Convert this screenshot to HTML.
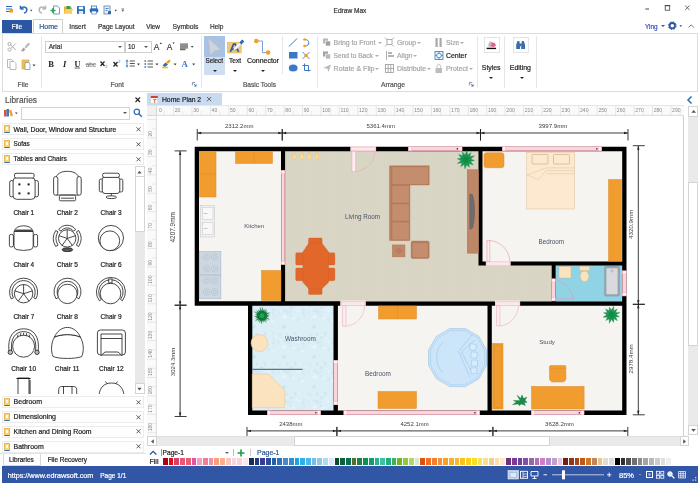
<!DOCTYPE html>
<html lang="en">
<head>
<meta charset="utf-8">
<title>Edraw Max - Home Plan 2</title>
<style>
*{box-sizing:border-box;margin:0;padding:0}
html,body{width:700px;height:485px;overflow:hidden;background:#fff}
body{font-family:"Liberation Sans",sans-serif;font-size:8px;color:#333;position:relative}
.a{position:absolute}
.t{position:absolute;white-space:nowrap;line-height:1;-webkit-text-stroke:.2px}
svg{position:absolute;overflow:visible}
#win{position:absolute;left:0;top:0;width:700px;height:485px;overflow:hidden;will-change:transform}
/* title */
#title{left:0;top:0;width:700px;height:19px;background:#fff}
/* tabs */
.tab{position:absolute;top:21px;height:11px;font-size:8.3px;line-height:11px;color:#333;white-space:nowrap}
#filebtn{left:2px;top:19.5px;width:29.5px;height:13px;background:#2b56a4;color:#fff;font-size:8.3px;line-height:13.5px;text-align:center}
#hometab{left:33px;top:19px;width:30px;height:15px;border:1px solid #d0d0d0;border-bottom:none;background:#fff;color:#2b579a;font-size:8.3px;line-height:13px;text-align:center}
/* ribbon */
#ribbon{left:2px;top:32.500px;width:696px;height:59px;border:1px solid #dcdcdc;background:#fff}
.sep{position:absolute;top:36px;width:1px;height:52px;background:#e6e6e6}
.glabel{position:absolute;top:80px;font-size:8px;color:#555;line-height:9px;white-space:nowrap;transform:translateX(-50%)}
.rt{position:absolute;font-size:7.8px;line-height:9px;color:#a0a0a0;white-space:nowrap}
.rtd{color:#333}
.combo{position:absolute;border:1px solid #cfcfcf;background:#fff;height:12px;font-size:7.8px;line-height:10px;color:#333;padding-left:3px}
.dd{position:absolute;width:0;height:0;border-left:2px solid transparent;border-right:2px solid transparent;border-top:2.5px solid #555}
/* libraries */
#lib{left:0;top:92px;width:146px;height:374px;background:#fff}
.cat{position:absolute;left:2px;width:142px;height:13px;border:1px solid #ececec;background:#fefefe;font-size:8.2px;line-height:11px;color:#222;padding-left:11.5px;white-space:nowrap}
.cat i{position:absolute;left:.5px;top:1.5px;width:6.5px;height:8px;background:#f7d57e;border:1px solid #e6b956;border-bottom:1.500px solid #2f6fb5}
.cat i:after{content:"";position:absolute;left:1px;top:1.200px;width:2.500px;height:3px;background:#fff8e4}
.cat b{position:absolute;right:5px;top:0;font-weight:normal;font-size:9px;color:#333}
.shl{position:absolute;font-size:7.8px;line-height:9px;color:#222;white-space:nowrap;transform:translateX(-50%)}
/* status */
#status{left:2px;top:466px;width:696px;height:17px;background:#3156a6;color:#fff;font-size:8.2px}
</style>
</head>
<body>
<div id="win">
<!-- TITLE BAR -->
<div id="title" class="a"></div>
<svg width="130" height="19" viewBox="0 0 130 19" style="left:0;top:0">
  <g stroke="#2b6cb8" stroke-width="1.2" fill="none"><path d="M6 6.500h6M6 9h6M6 11.500h6"/></g>
  <rect x="9.500" y="9" width="3.500" height="3.500" fill="#f0a020"/>
  <path d="M20.500 9v-3.200M20.500 9h3.200M20.800 8.700c2.500-3 7-1.500 5.800 2.200c-.4 1.200-1.400 2-2.600 2.200" stroke="#2b6cb8" stroke-width="1.500" fill="none"/>
  <path d="M30 9.800h2.400l-1.200 1.600z" fill="#444"/>
  <path d="M45.500 9v-3.200M45.500 9h-3.200M45.200 8.700c-2.500-3-7-1.500-5.800 2.200c.4 1.200 1.400 2 2.600 2.200" stroke="#b4b4b4" stroke-width="1.500" fill="none"/>
  <path d="M53.500 6h4l2 2v6h-6z" fill="#fff" stroke="#5580b0" stroke-width=".8"/>
  <path d="M50.500 10.500h5M53 8v5" stroke="#2aa44a" stroke-width="1.600"/>
  <path d="M64 6.500h4l1 1h3v6h-8z" fill="#f0b030"/>
  <path d="M66.500 6h4v5h-4z" fill="#3a9a5a"/>
  <path d="M64 13.500l1.500-4.500h7.500l-1.500 4.500z" fill="#f8d060"/>
  <rect x="77" y="6" width="8" height="8" rx=".8" fill="#2b6cb8"/>
  <rect x="78.800" y="6.700" width="4.400" height="2.600" fill="#fff"/>
  <rect x="78.800" y="11" width="4.400" height="3" fill="#dfe9f5"/>
  <rect x="91.500" y="6" width="5" height="3" fill="#fff" stroke="#2b6cb8" stroke-width=".8"/>
  <rect x="89.800" y="8.500" width="8.400" height="4" rx=".8" fill="#2b6cb8"/>
  <rect x="91.800" y="11" width="4.400" height="3" fill="#fff" stroke="#2b6cb8" stroke-width=".6"/>
  <rect x="104" y="6" width="6" height="8" fill="#e6eef8" stroke="#5580b0" stroke-width=".8"/>
  <path d="M105.500 8.500h3M105.500 10.500h2" stroke="#2b6cb8" stroke-width=".8"/>
  <path d="M108 11h3v3h-3z" fill="#2b6cb8"/>
  <path d="M114.500 9.800h2.400l-1.200 1.600z" fill="#444"/>
  <path d="M121.500 9h2.600" stroke="#444" stroke-width=".8"/>
  <path d="M121.500 10.200h2.600l-1.300 1.600z" fill="#444"/>
</svg>
<svg width="60" height="19" viewBox="640 0 60 19" style="left:640px;top:0">
  <path d="M645.400 9h3.600" stroke="#444" stroke-width="1"/>
  <rect x="665.200" y="5.700" width="4.500" height="4.500" fill="none" stroke="#444" stroke-width=".8"/><path d="M664.800 5.600h5.300" stroke="#444" stroke-width="1"/>
  <path d="M685.200 5.600l4.300 4.300M689.500 5.600l-4.300 4.300" stroke="#444" stroke-width=".8"/>
</svg>
<svg width="40" height="14" viewBox="660 19 40 14" style="left:660px;top:19px">
  <circle cx="672.300" cy="25.700" r="2.700" fill="none" stroke="#2b579a" stroke-width="1.800"/>
  <circle cx="672.300" cy="25.700" r="3.900" fill="none" stroke="#2b579a" stroke-width="1" stroke-dasharray="1.500 1.560"/>
  <path d="M679.400 25.200h2.800l-1.400 1.800z" fill="#2b579a"/>
  <path d="M688.500 27.500l2.700-2.700l2.700 2.700" fill="none" stroke="#666" stroke-width=".9"/>
</svg>

<div class="t" style="left:333.6px;top:8px;font-size:6.56px;color:#333;">Edraw Max</div>
<div id="filebtn" class="a"></div>
<div id="hometab" class="a"></div>
<div class="t" style="left:11.8px;top:24px;font-size:6.33px;color:#fff;">File</div>
<div class="t" style="left:39.3px;top:23px;font-size:7.01px;color:#2b579a;">Home</div>
<div class="t" style="left:69.3px;top:24px;font-size:6.6px;color:#333;">Insert</div>
<div class="t" style="left:98px;top:24px;font-size:6.5px;color:#333;">Page Layout</div>
<div class="t" style="left:146.3px;top:24px;font-size:6.37px;color:#333;">View</div>
<div class="t" style="left:172.5px;top:24px;font-size:6.78px;color:#333;">Symbols</div>
<div class="t" style="left:210px;top:24px;font-size:6.56px;color:#333;">Help</div>
<div class="t" style="left:645px;top:24px;font-size:6.47px;color:#3b4fc4;">Ying</div>
<div class="dd" style="left:660.5px;top:25.1px;border-top-color:#2b579a"></div>
<div id="ribbon" class="a"></div>
<div class="sep" style="left:41px;height:52px"></div>
<div class="sep" style="left:200.5px;height:52px"></div>
<div class="sep" style="left:281.5px;height:38px"></div>
<div class="sep" style="left:316.5px;height:52px"></div>
<div class="sep" style="left:476.5px;height:52px"></div>
<div class="sep" style="left:504px;height:52px"></div>
<div class="sep" style="left:535.5px;height:52px"></div>
<!-- File group icons -->
<svg width="40" height="40" viewBox="0 0 40 40" style="left:2px;top:34px">
  <g stroke="#a8a8a8" stroke-width=".9" fill="none"><circle cx="7.500" cy="10" r="1.600"/><circle cx="7.500" cy="15.500" r="1.600"/><path d="M8.800 11l5 5M8.800 14.500l5-5"/></g>
  <path d="M26.500 8.500l-4 4.500l1.500 1.500l4-4.500z" fill="#b8b8b8"/><path d="M21.500 13.500l2 2l-2.500 2l-2-.5z" fill="#a0a0a0"/>
  <path d="M5.500 25.500h4l2 2v6h-6z" fill="#fff" stroke="#a8a8a8" stroke-width=".8"/><path d="M8 27.500h4l2 2v6h-6z" fill="#fff" stroke="#a8a8a8" stroke-width=".8"/>
  <rect x="20" y="26" width="7" height="9" fill="#f3c14b" stroke="#d9a23a" stroke-width=".6"/>
  <path d="M23 28.500h3.500l1.500 1.500v5.500h-5z" fill="#fff" stroke="#6a8cc0" stroke-width=".7"/>
  <path d="M30.500 30.500h3l-1.500 2z" fill="#444"/>
</svg>
<!-- Font group icons -->
<svg width="50" height="14" viewBox="152 40 50 14" style="left:152px;top:40px">
  <text x="153.800" y="50" font-family="Liberation Sans, sans-serif" font-size="8.400" fill="#333" stroke="#333" stroke-width=".15">A</text>
  <path d="M159.600 44l1.200-1.600l1.200 1.600z" fill="#333"/>
  <text x="166.800" y="50" font-family="Liberation Sans, sans-serif" font-size="8.400" fill="#333" stroke="#333" stroke-width=".15">A</text>
  <path d="M172.400 42.400l1.200 1.600l1.200-1.600z" fill="#333"/>
  <path d="M180 44.200h8M180 46h8M180 47.800h8M180 49.500h5.500" stroke="#6a6a6a" stroke-width="1.300"/><path d="M190.800 46h2.800l-1.400 1.800z" fill="#444"/>
</svg>
<svg width="160" height="14" viewBox="0 0 160 14" style="left:45px;top:57px">
  <text x="3.300" y="10" font-family="Liberation Serif, serif" font-weight="bold" font-size="8.500" fill="#222">B</text>
  <text x="18" y="10" font-family="Liberation Serif, serif" font-weight="bold" font-style="italic" font-size="8.500" fill="#222">I</text>
  <text x="29.500" y="9.500" font-family="Liberation Serif, serif" font-weight="bold" font-size="8" fill="#222">U</text><path d="M29.500 11h5.500" stroke="#222" stroke-width=".7"/>
  <text x="40.800" y="9.500" font-family="Liberation Sans, sans-serif" font-size="6.300" fill="#6a6a6a">abc</text><path d="M40.300 7.300h10.500" stroke="#6a6a6a" stroke-width=".6"/>
  <path d="M55.500 4.500l4 4.500M59.500 4.500l-4 4.500" stroke="#222" stroke-width="1.200"/><text x="60.300" y="10.500" font-family="Liberation Sans, sans-serif" font-size="4" fill="#2b6cb8">2</text>
  <path d="M68.500 5l4 4.500M72.500 5l-4 4.500" stroke="#222" stroke-width="1.200"/><text x="73.300" y="6" font-family="Liberation Sans, sans-serif" font-size="4" fill="#2b6cb8">2</text>
  <path d="M82 2.500l1.500 2h-3zM82 10.500l1.500-2h-3z" fill="#2b6cb8"/><path d="M82 4.500v4" stroke="#2b6cb8" stroke-width=".8"/><path d="M84.800 4h5M84.800 6.500h5M84.800 9h5" stroke="#555" stroke-width="1.100"/><path d="M92 6.500h3l-1.500 2z" fill="#444"/>
  <path d="M99.500 4h1.500M99.500 7h1.500M99.500 10h1.500" stroke="#2b6cb8" stroke-width="1.300"/><path d="M102.500 4h5.500M102.500 7h5.500M102.500 10h5.500" stroke="#555" stroke-width="1"/><path d="M110.500 6.500h3l-1.500 2z" fill="#444"/>
  <path d="M117.500 8.500l3-3l2.500 2l-3 2.500z" fill="#2b6cb8"/><path d="M121 5l3.500-2.500l1.200 1.400l-2.800 3z" fill="#e8a020"/><path d="M117 10.500h6" stroke="#f0c020" stroke-width="1.600"/><path d="M128.600 6.500h3l-1.500 2z" fill="#444"/>
  <text x="136.600" y="9.900" font-family="Liberation Serif, serif" font-weight="bold" font-size="8.800" fill="#3a78c8">A</text>
  <path d="M147.200 6.500h3l-1.500 2z" fill="#444"/>
</svg>
<svg width="5" height="5" viewBox="0 0 6 6" style="left:192px;top:81.500px"><path d="M.5 4V.5H4" fill="none" stroke="#666" stroke-width=".8"/><path d="M2 2l3 3M5 2.500v2.500h-2.500" fill="none" stroke="#2b6cb8" stroke-width=".9"/></svg>
<!-- Basic Tools icons -->
<div class="a" style="left:204px;top:35.500px;width:21px;height:39px;background:#cfdff2"></div>
<div class="a" style="left:204px;top:35.500px;width:21px;height:21.500px;background:#a9c1e3"></div>
<svg width="90" height="24" viewBox="204 35 90 24" style="left:204px;top:35px">
  <path d="M208.500 38.500l12.500 11.500l-6.300.4l-4.300 4.600z" fill="#cfd3da" stroke="#bcc0c8" stroke-width=".5"/>
  <rect x="227.300" y="42.200" width="14" height="10.800" fill="#f0c878" stroke="#e6b050" stroke-width=".5"/>
  <path d="M230.300 51.800l3.300-7.600h1.600l3.300 7.600M231.600 49.300h5" stroke="#2b5cae" stroke-width="1.700" fill="none"/>
  <path d="M233.300 50.600l1.200-3.200l4.800-5l2 1.900l-4.800 5z" fill="#f4f6fa" stroke="#c8d4e8" stroke-width=".3"/>
  <path d="M239.300 42.400l1.900-2l2.100 2l-1.900 2z" fill="#2b6cb8"/><path d="M241.200 40.400l.9-.9l2.100 2l-.9.900z" fill="#1e4e94"/>
  <path d="M256.300 41h6.200v11.600h5.600" fill="none" stroke="#6c94d8" stroke-width=".9"/>
  <circle cx="256.300" cy="41" r="2.300" fill="#f0a21e"/><circle cx="268.100" cy="52.500" r="2.300" fill="#f0a21e"/>
</svg>
<svg width="30" height="40" viewBox="0 0 30 40" style="left:286px;top:35px">
  <path d="M3 11.500l8-8" stroke="#3a7ac8" stroke-width="1"/>
  <path d="M19 4.500c5 0 5 6.500 0 6.500" fill="none" stroke="#3a7ac8" stroke-width="1"/><circle cx="18.500" cy="4.500" r="1.300" fill="#f0a020"/><circle cx="18.500" cy="11" r="1.300" fill="#f0a020"/>
  <rect x="3" y="17" width="8.500" height="6.500" fill="#3a7ac8"/>
  <path d="M16.500 17l7 7M23.500 17l-7 7" stroke="#5a8ad0" stroke-width="1"/><circle cx="20" cy="20.500" r="1.700" fill="#f0a020"/>
  <ellipse cx="7.200" cy="33" rx="4.400" ry="3.600" fill="#3a7ac8"/>
  <path d="M18.500 28.500v7h6M16.500 30.500h6v6" fill="none" stroke="#3a7ac8" stroke-width="1"/>
</svg>
<!-- Arrange icons -->
<svg width="130" height="40" viewBox="0 0 130 40" style="left:320px;top:35px">
  <g fill="#b8b8b8">
    <rect x="3" y="3.500" width="5" height="5"/><rect x="5.500" y="6" width="5" height="5" fill="#a0a0a0" stroke="#fff" stroke-width=".6"/>
    <rect x="3" y="16.500" width="5" height="5" fill="#a0a0a0"/><rect x="5.500" y="19" width="5" height="5" stroke="#fff" stroke-width=".6"/>
    <path d="M3 33l8-3.500l-2.500 7.500l-1.200-3.400z"/>
  </g>
  <g fill="none" stroke="#9a9a9a" stroke-width=".8">
    <rect x="67" y="4.500" width="5" height="5"/><path d="M65 2.500l2 2M74 2.500l-2 2M65 11.500l2-2M74 11.500l-2-2"/>
    <path d="M66.500 16v9"/><path d="M68 18h4M68 21h6" stroke-width="1.600"/>
    <rect x="65.500" y="29.500" width="8" height="8"/><path d="M68.200 29.500v8M70.800 29.500v8M65.500 33.500h8"/>
  </g>
  <rect x="115.500" y="3" width="2.200" height="9" fill="#a8a8a8"/><rect x="119.500" y="3" width="2.200" height="9" fill="#a8a8a8"/>
  <rect x="115" y="16.500" width="8" height="8" fill="#eaf2fb" stroke="#3a78c0" stroke-width=".8"/><circle cx="119" cy="20.500" r="2.300" fill="#fff" stroke="#3a78c0" stroke-width=".8"/><path d="M119 16.500v2M119 22.500v2M115 20.500h2M121 20.500h2" stroke="#3a78c0" stroke-width=".7"/>
  <rect x="115.500" y="33" width="6.500" height="5" fill="#bdbdbd"/><path d="M117 33v-1.700a1.800 1.800 0 0 1 3.600 0V33" fill="none" stroke="#bdbdbd" stroke-width=".9"/>
</svg>
<svg width="5" height="5" viewBox="0 0 6 6" style="left:468.500px;top:81.500px"><path d="M.5 4V.5H4" fill="none" stroke="#666" stroke-width=".8"/><path d="M2 2l3 3M5 2.500v2.500h-2.500" fill="none" stroke="#2b6cb8" stroke-width=".9"/></svg>
<!-- Styles / Editing -->
<div class="a" style="left:483.500px;top:37px;width:16px;height:16px;border:1px solid #e4e4e4;background:#fff"></div>
<svg width="16" height="16" viewBox="0 0 16 16" style="left:483.500px;top:37px">
  <path d="M2.600 11.400h9.500" stroke="#111" stroke-width="1.400"/><path d="M6 9.500l1.500-4.500l3.500 1.200l1 2.300l-2 1.500z" fill="#e8608a"/><path d="M4 9.500l1-4l2-1.500l.8 2l-1.300 3.500z" fill="#b8bcc4"/>
</svg>
<div class="a" style="left:513px;top:37px;width:16px;height:16px;border:1px solid #e4e4e4;background:#fff"></div>
<svg width="16" height="16" viewBox="0 0 16 16" style="left:513px;top:37px">
  <path d="M3.200 12V7.500l1.300-3.500h1.800L7 7.500V12zM8.200 12V7.500l.7-3.500h1.800l1.300 3.500V12z" fill="#3a6ea8"/><rect x="6.800" y="6.500" width="1.600" height="2.800" fill="#3a6ea8"/>
</svg>

<div class="t" style="left:17.6px;top:82px;font-size:6.7px;color:#555;">File</div>
<div class="combo" style="left:45px;top:40.5px;width:80px"></div>
<div class="combo" style="left:124.5px;top:40.5px;width:27px"></div>
<div class="t" style="left:48.7px;top:44px;font-size:6.65px;color:#333;">Arial</div>
<div class="t" style="left:128px;top:44px;font-size:6.29px;color:#333;">10</div>
<div class="dd" style="left:118px;top:46px;border-top-color:#555"></div>
<div class="dd" style="left:144px;top:46px;border-top-color:#555"></div>
<div class="t" style="left:110.5px;top:82px;font-size:6.7px;color:#555;">Font</div>
<div class="t" style="left:205.5px;top:58px;font-size:6.3px;color:#222;">Select</div>
<div class="t" style="left:229px;top:58px;font-size:6.54px;color:#222;">Text</div>
<div class="t" style="left:247px;top:58px;font-size:6.94px;color:#222;">Connector</div>
<div class="dd" style="left:212.5px;top:69.6px;border-top-color:#222"></div>
<div class="dd" style="left:233px;top:69.6px;border-top-color:#222"></div>
<div class="dd" style="left:261px;top:69.6px;border-top-color:#222"></div>
<div class="t" style="left:243px;top:82px;font-size:6.55px;color:#555;">Basic Tools</div>
<div class="t" style="left:333.6px;top:40px;font-size:6.9px;color:#a6a6a6;">Bring to Front</div>
<div class="dd" style="left:377.5px;top:41.6px;border-top-color:#b0b0b0"></div>
<div class="t" style="left:333.6px;top:53px;font-size:6.62px;color:#a6a6a6;">Send to Back</div>
<div class="dd" style="left:375px;top:54.6px;border-top-color:#b0b0b0"></div>
<div class="t" style="left:333.6px;top:66px;font-size:7.09px;color:#a6a6a6;">Rotate &amp; Flip</div>
<div class="dd" style="left:374.5px;top:67.6px;border-top-color:#b0b0b0"></div>
<div class="t" style="left:397px;top:40px;font-size:6.9px;color:#a6a6a6;">Group</div>
<div class="dd" style="left:417px;top:41.6px;border-top-color:#b0b0b0"></div>
<div class="t" style="left:397px;top:53px;font-size:6.9px;color:#a6a6a6;">Align</div>
<div class="dd" style="left:413px;top:54.6px;border-top-color:#b0b0b0"></div>
<div class="t" style="left:397px;top:66px;font-size:6.9px;color:#a6a6a6;">Distribute</div>
<div class="dd" style="left:426.5px;top:67.6px;border-top-color:#b0b0b0"></div>
<div class="t" style="left:446px;top:40px;font-size:6.9px;color:#a6a6a6;">Size</div>
<div class="dd" style="left:459.5px;top:41.6px;border-top-color:#b0b0b0"></div>
<div class="t" style="left:446px;top:53px;font-size:6.9px;color:#222;">Center</div>
<div class="t" style="left:446px;top:66px;font-size:6.9px;color:#a6a6a6;">Protect</div>
<div class="dd" style="left:469px;top:67.6px;border-top-color:#b0b0b0"></div>
<div class="t" style="left:381px;top:82px;font-size:6.75px;color:#555;">Arrange</div>
<div class="t" style="left:481.8px;top:65px;font-size:6.9px;color:#222;">Styles</div>
<div class="t" style="left:509.8px;top:65px;font-size:6.9px;color:#222;">Editing</div>
<div class="dd" style="left:489px;top:77.4px;border-top-color:#222"></div>
<div class="dd" style="left:519.5px;top:77.4px;border-top-color:#222"></div>
<!-- LIBRARIES -->
<div id="lib" class="a"></div>
<div class="t" style="left:5px;top:96px;font-size:8.34px;color:#555;">Libraries</div>
<svg width="8" height="8" viewBox="0 0 8 8" style="left:134px;top:96px"><path d="M1.500 1.500l4.500 4.500M6 1.500l-4.500 4.500" stroke="#222" stroke-width="1.100"/></svg>
<svg width="20" height="12" viewBox="0 0 20 12" style="left:2px;top:107px"><rect x="2" y="3" width="2.500" height="6.500" fill="#e05040"/><rect x="4.500" y="2" width="2.500" height="7.500" fill="#3a78c0"/><path d="M7 3.500l2.200-.8l1.800 6l-2.200.8z" fill="#f0a020"/><path d="M13 5.500h2.600l-1.300 1.700z" fill="#444"/></svg>
<div class="a" style="left:21px;top:107px;width:109px;height:12.500px;border:1px solid #d2d2d2;background:#fff"></div>
<div class="dd" style="left:123px;top:112.3px;border-top-color:#555"></div>
<svg width="12" height="12" viewBox="0 0 12 12" style="left:132px;top:107px"><circle cx="4.800" cy="4.800" r="2.700" fill="none" stroke="#2b6cb8" stroke-width="1.200"/><path d="M6.800 6.800l3 3" stroke="#2b6cb8" stroke-width="1.500"/></svg>
<div class="cat" style="top:122.7px;height:12.8px"><i></i></div>
<div class="t" style="left:13.6px;top:127px;font-size:6.86px;color:#222;">Wall, Door, Window and Structure</div>
<svg width="7" height="7" viewBox="0 0 7 7" style="left:134.500px;top:125.9px"><path d="M1.500 1.300l4 4M5.500 1.300l-4 4" stroke="#333" stroke-width=".8"/></svg>
<div class="cat" style="top:137.7px;height:12.8px"><i></i></div>
<div class="t" style="left:13.6px;top:141px;font-size:6.3px;color:#222;">Sofas</div>
<svg width="7" height="7" viewBox="0 0 7 7" style="left:134.500px;top:140.8px"><path d="M1.500 1.300l4 4M5.500 1.300l-4 4" stroke="#333" stroke-width=".8"/></svg>
<div class="cat" style="top:152.7px;height:12.8px"><i></i></div>
<div class="t" style="left:13.6px;top:156px;font-size:6.65px;color:#222;">Tables and Chairs</div>
<svg width="7" height="7" viewBox="0 0 7 7" style="left:134.500px;top:155.6px"><path d="M1.500 1.300l4 4M5.500 1.300l-4 4" stroke="#333" stroke-width=".8"/></svg>
<div class="cat" style="top:395.5px;height:12.6px"><i></i></div>
<div class="t" style="left:13.6px;top:398px;font-size:7px;color:#222;">Bedroom</div>
<svg width="7" height="7" viewBox="0 0 7 7" style="left:134.500px;top:398.6px"><path d="M1.500 1.300l4 4M5.500 1.300l-4 4" stroke="#333" stroke-width=".8"/></svg>
<div class="cat" style="top:410.5px;height:12.6px"><i></i></div>
<div class="t" style="left:13.6px;top:413px;font-size:7px;color:#222;">Dimensioning</div>
<svg width="7" height="7" viewBox="0 0 7 7" style="left:134.500px;top:413.7px"><path d="M1.500 1.300l4 4M5.500 1.300l-4 4" stroke="#333" stroke-width=".8"/></svg>
<div class="cat" style="top:425.5px;height:12.6px"><i></i></div>
<div class="t" style="left:13.6px;top:429px;font-size:6.88px;color:#222;">Kitchen and Dining Room</div>
<svg width="7" height="7" viewBox="0 0 7 7" style="left:134.500px;top:428.4px"><path d="M1.500 1.300l4 4M5.500 1.300l-4 4" stroke="#333" stroke-width=".8"/></svg>
<div class="cat" style="top:440.5px;height:12.6px"><i></i></div>
<div class="t" style="left:13.6px;top:444px;font-size:6.94px;color:#222;">Bathroom</div>
<svg width="7" height="7" viewBox="0 0 7 7" style="left:134.500px;top:443.4px"><path d="M1.500 1.300l4 4M5.500 1.300l-4 4" stroke="#333" stroke-width=".8"/></svg>
<div class="a" style="left:134.500px;top:166px;width:10px;height:227.500px;background:#e9e9e9"></div>
<div class="a" style="left:134.500px;top:176px;width:10px;height:56px;background:#fff;border:1px solid #d4d4d4"></div>
<div class="a" style="left:134.500px;top:166px;width:10px;height:10.500px;background:#fff;border:1px solid #d4d4d4"></div>
<div class="a" style="left:134.500px;top:383px;width:10px;height:10.500px;background:#fff;border:1px solid #d4d4d4"></div>
<svg width="8" height="8" viewBox="0 0 8 8" style="left:135px;top:167.500px"><path d="M2.300 5.500l2.200-2.800l2.200 2.800z" fill="#555"/></svg>
<svg width="8" height="8" viewBox="0 0 8 8" style="left:135px;top:384.500px"><path d="M2.300 2.700l2.200 2.800l2.200-2.800z" fill="#555"/></svg>
<div class="a" style="left:0;top:166px;width:134px;height:228px;overflow:hidden">
<svg width="134" height="228" viewBox="0 166 134 228" style="left:0;top:0" fill="#fff" stroke="#1a1a1a" stroke-width=".8">
  <!-- Chair 1 -->
  <rect x="9.700" y="180.500" width="4.200" height="16.400" rx="1.900"/><rect x="34.200" y="180.500" width="4.200" height="16.400" rx="1.900"/>
  <rect x="13.100" y="177.600" width="22" height="21.700" rx="3.500"/>
  <rect x="14.500" y="173.300" width="19.600" height="4.700" rx="1.700"/>
  <g fill="#1a1a1a" stroke="none"><rect x="18.400" y="183.400" width="2" height="2"/><rect x="27.600" y="183.400" width="2" height="2"/><rect x="18.400" y="192.400" width="2" height="2"/><rect x="27.600" y="192.400" width="2" height="2"/></g>
  <!-- Chair 2 -->
  <path d="M56.200 195V178.500c0-4.500 4.500-7.200 11.200-7.200s11.200 2.700 11.200 7.200V195z"/>
  <rect x="53.600" y="176.600" width="4.200" height="18.600" rx="2"/><rect x="77" y="176.600" width="4.200" height="18.600" rx="2"/>
  <rect x="59.400" y="195.200" width="16.200" height="5.600" rx="1.200"/><path d="M61 198.200h13" fill="none"/>
  <!-- Chair 3 -->
  <rect x="99.300" y="179" width="3.600" height="13" rx="1.600"/><rect x="119.200" y="179" width="3.600" height="13" rx="1.600"/>
  <rect x="102.200" y="176.900" width="17.600" height="16.600" rx="2.800"/>
  <rect x="102.600" y="173.200" width="16.800" height="4.200" rx="1.700"/>
  <path d="M111.300 193.500v2.800" fill="none"/><ellipse cx="111.300" cy="197.200" rx="5.300" ry="1.400"/>
  <!-- Chair 4 -->
  <rect x="9.400" y="234.400" width="4" height="12.600" rx="1.700"/><rect x="33.600" y="234.400" width="4" height="12.600" rx="1.700"/>
  <path d="M14 231.500h19.200v14.500q0 3-3 3.700q-6.600 1.500-13.200 0q-3-.700-3-3.700z"/>
  <path d="M14.300 231.300c1-7.300 17.600-7.300 18.600 0z"/><path d="M15.300 230.300h16.600" fill="none" stroke-width="1.500" stroke="#444"/>
  <!-- Chair 5 -->
  <path d="M58 245.200a12.600 12.600 0 0 1 0-13.400l-2.300-1.300a15 15 0 0 0 0 16z"/>
  <path d="M76.400 245.200a12.600 12.600 0 0 0 0-13.400l2.300-1.300a15 15 0 0 1 0 16z"/>
  <circle cx="67.200" cy="238.400" r="8.700"/>
  <path d="M67.200 238.400v-8.700M67.200 238.400l8.300-2.700M67.200 238.400l5.100 7M67.200 238.400l-5.100 7M67.200 238.400l-8.300-2.700" fill="none"/>
  <path d="M58.800 229.600c3.500-5.800 13.300-5.800 16.800 0l-2.200 1.500c-2.800-4.200-9.600-4.200-12.400 0z"/>
  <ellipse cx="67.400" cy="249.700" rx="5.300" ry="1.900" fill="#5a5a5a"/>
  <!-- Chair 6 -->
  <circle cx="110.900" cy="238" r="12.600"/><circle cx="109.800" cy="240.800" r="9.900"/>
  <!-- Chair 7 -->
  <path d="M11.36 298.99A14 14 0 1 1 35.84 298.99L33.75 297.82A11.6 11.6 0 1 0 13.45 297.82z"/>
  <circle cx="23.600" cy="293.700" r="9.200"/>
  <path d="M23.6 293.7L23.6 284.5M23.6 293.7L32.35 290.86M23.6 293.7L29.01 301.14M23.6 293.7L18.19 301.14M23.6 293.7L14.85 290.86" fill="none"/>
  <!-- Chair 8 -->
  <path d="M56.05 298.85A13.5 13.5 0 1 1 78.95 298.85L76.32 297.21A10.4 10.4 0 1 0 58.68 297.21z"/>
  <circle cx="67.400" cy="293.900" r="9.700"/>
  <!-- Chair 9 -->
  <path d="M99.47 300.83A14.5 14.5 0 1 1 122.33 300.83L120.51 299.41A12.2 12.2 0 1 0 101.29 299.41z"/>
  <circle cx="110.500" cy="293.500" r="10.300"/><rect x="108.800" y="279" width="3.200" height="4"/>
  <!-- Chair 10 -->
  <path d="M9 351.500C7.200 336 14 328.800 23.600 328.800S40 336 38.200 351.500L35.600 350C36.800 338 31.500 331.600 23.600 331.600S10.400 338 11.600 350z"/>
  <circle cx="23.600" cy="346.200" r="11"/>
  <path d="M17.500 337.200l.5-2.600M20.500 335.900l.3-2.700M23.600 335.400v-2.700M26.700 335.900l-.3-2.700M29.700 337.200l-.5-2.600" fill="none"/>
  <circle cx="10.300" cy="352.300" r="2.200" fill="#bbb"/><circle cx="37" cy="352.300" r="2.200" fill="#bbb"/>
  <!-- Chair 11 -->
  <path d="M54.500 337c-3.500 6-3.800 14-1.500 19.500c6 2.600 22.800 2.600 28.800 0c2.300-5.500 2-13.500-1.500-19.500c-8-3.200-17.800-3.200-25.800 0z"/>
  <path d="M54.500 337c2-5 7-9.600 12.900-9.600s10.900 4.600 12.900 9.600c-8-3.200-17.800-3.200-25.800 0z"/>
  <!-- Chair 12 -->
  <rect x="97.400" y="330" width="28" height="25" rx="3"/>
  <path d="M101 355.500v-21.500h21v21.500l-4-3.500h-13z"/><path d="M101 338.500h21" fill="none"/>
  <!-- row 5 partial -->
  <rect x="18" y="378" width="11" height="20"/><path d="M16.500 378.500h14M30 380v14" fill="none" stroke-width="1"/>
  <path d="M58.700 395v-5.500c0-2 1.400-3 3-3h12c1.600 0 3 1 3 3V395M63.500 386.500V395M72 386.500V395" fill="none"/>
  <path d="M99 395c1-8 5.500-12 12.500-12s11.500 4 12.500 12" fill="none"/><path d="M107 383.500l-1.500-2M116 383.500l1.500-2" fill="none"/>
</svg>

</div>
<div class="t" style="left:13.4px;top:210px;font-size:6.45px;color:#222;">Chair 1</div>
<div class="t" style="left:56.7px;top:210px;font-size:6.58px;color:#222;">Chair 2</div>
<div class="t" style="left:100.6px;top:210px;font-size:6.51px;color:#222;">Chair 3</div>
<div class="t" style="left:13.4px;top:262px;font-size:6.45px;color:#222;">Chair 4</div>
<div class="t" style="left:56.7px;top:262px;font-size:6.58px;color:#222;">Chair 5</div>
<div class="t" style="left:100.6px;top:262px;font-size:6.51px;color:#222;">Chair 6</div>
<div class="t" style="left:13.4px;top:314px;font-size:6.48px;color:#222;">Chair 7</div>
<div class="t" style="left:56.7px;top:314px;font-size:6.58px;color:#222;">Chair 8</div>
<div class="t" style="left:100.6px;top:314px;font-size:6.51px;color:#222;">Chair 9</div>
<div class="t" style="left:11.3px;top:366px;font-size:6.59px;color:#222;">Chair 10</div>
<div class="t" style="left:54.8px;top:366px;font-size:6.69px;color:#222;">Chair 11</div>
<div class="t" style="left:99px;top:366px;font-size:6.53px;color:#222;">Chair 12</div>
<div class="a" style="left:3px;top:453px;width:38px;height:13px;border:1px solid #d8d8d8;border-top:none;background:#fff"></div>
<div class="a" style="left:0;top:453px;width:146px;height:1px;background:#e4e4e4"></div>
<div class="t" style="left:8.9px;top:457px;font-size:6.49px;color:#222;">Libraries</div>
<div class="t" style="left:47.7px;top:457px;font-size:6.43px;color:#222;">File Recovery</div>
<!-- DOCUMENT AREA -->
<div class="a" style="left:147px;top:92.800px;width:75px;height:13.200px;background:#c9d9f0"></div>
<svg width="10" height="10" viewBox="0 0 10 10" style="left:149.500px;top:94.500px"><rect x=".8" y="1" width="7" height="7.500" fill="#fff" stroke="#c8c8c8" stroke-width=".5"/><rect x=".8" y="1" width="7" height="2" fill="#d04030"/><path d="M3 4.500h3.500M4.700 4.500v3.500" stroke="#e08020" stroke-width="1.100"/></svg>
<div class="t" style="left:162px;top:97px;font-size:6.75px;color:#222;">Home Plan 2</div>
<svg width="7" height="7" viewBox="0 0 7 7" style="left:206px;top:96.300px"><path d="M1 1l4.200 4.200M5.200 1l-4.200 4.200" stroke="#444" stroke-width=".8"/></svg>
<svg width="8" height="10" viewBox="0 0 8 10" style="left:686px;top:94.500px"><path d="M5.500 1.500l-3.500 3.500l3.500 3.500" fill="none" stroke="#2b6cb8" stroke-width="1.500"/></svg>
<div class="a" style="left:147px;top:106px;width:541px;height:341px;background:#fff"></div>
<div class="a" style="left:147px;top:105.300px;width:537px;height:11.100px;background:#fafafa;border-bottom:1px solid #e0e0e0;border-top:1px solid #e6e6e6"></div>
<div class="a" style="left:147px;top:106px;width:10.300px;height:330px;background:#fafafa;border-right:1px solid #e0e0e0"></div>
<div class="a" style="left:147px;top:105.800px;width:10.300px;height:10.600px;background:#f0f0f0;border-right:1px solid #d8d8d8;border-bottom:1px solid #d8d8d8"></div>
<svg width="553" height="341" viewBox="147 106 553 341" style="left:147px;top:106px" font-family="Liberation Sans, sans-serif" font-size="5.100" fill="#8a8a8a"><text x="174.78" y="111.600">20</text><text x="193.2" y="111.600">30</text><text x="211.62" y="111.600">40</text><text x="230.04" y="111.600">50</text><text x="248.46" y="111.600">60</text><text x="266.88" y="111.600">70</text><text x="285.3" y="111.600">80</text><text x="303.72" y="111.600">90</text><text x="322.14" y="111.600">100</text><text x="340.56" y="111.600">110</text><text x="358.98" y="111.600">120</text><text x="377.4" y="111.600">130</text><text x="395.82" y="111.600">140</text><text x="414.24" y="111.600">150</text><text x="432.66" y="111.600">160</text><text x="451.08" y="111.600">170</text><text x="469.5" y="111.600">180</text><text x="487.92" y="111.600">190</text><text x="506.34" y="111.600">200</text><text x="524.76" y="111.600">210</text><text x="543.18" y="111.600">220</text><text x="561.6" y="111.600">230</text><text x="580.02" y="111.600">240</text><text x="598.44" y="111.600">250</text><text x="616.86" y="111.600">260</text><text x="635.28" y="111.600">270</text><text x="653.7" y="111.600">280</text><text x="672.12" y="111.600">290</text><text x="158.900" y="111.600">0</text><text transform="translate(152.300 136.6) rotate(-90)">20</text><text transform="translate(152.300 155.02) rotate(-90)">30</text><text transform="translate(152.300 173.44) rotate(-90)">40</text><text transform="translate(152.300 191.86) rotate(-90)">50</text><text transform="translate(152.300 210.28) rotate(-90)">60</text><text transform="translate(152.300 228.7) rotate(-90)">70</text><text transform="translate(152.300 247.12) rotate(-90)">80</text><text transform="translate(152.300 265.54) rotate(-90)">90</text><text transform="translate(152.300 283.96) rotate(-90)">100</text><text transform="translate(152.300 302.38) rotate(-90)">110</text><text transform="translate(152.300 320.8) rotate(-90)">120</text><text transform="translate(152.300 339.22) rotate(-90)">130</text><text transform="translate(152.300 357.64) rotate(-90)">140</text><text transform="translate(152.300 376.06) rotate(-90)">150</text><text transform="translate(152.300 394.48) rotate(-90)">160</text><text transform="translate(152.300 412.9) rotate(-90)">170</text><text transform="translate(152.300 431.32) rotate(-90)">180</text><path d="M173.58 106v10M192 106v10M210.42 106v10M228.84 106v10M247.26 106v10M265.68 106v10M284.1 106v10M302.52 106v10M320.94 106v10M339.36 106v10M357.78 106v10M376.2 106v10M394.62 106v10M413.04 106v10M431.46 106v10M449.88 106v10M468.3 106v10M486.72 106v10M505.14 106v10M523.56 106v10M541.98 106v10M560.4 106v10M578.82 106v10M597.24 106v10M615.66 106v10M634.08 106v10M652.5 106v10M670.92 106v10M147 119.58h10M147 138h10M147 156.42h10M147 174.84h10M147 193.26h10M147 211.68h10M147 230.1h10M147 248.52h10M147 266.94h10M147 285.36h10M147 303.78h10M147 322.2h10M147 340.62h10M147 359.04h10M147 377.46h10M147 395.88h10M147 414.3h10M147 432.72h10" stroke="#d6d6d6" stroke-width=".6" fill="none"/><path d="M164.37 111v5M182.79 111v5M201.21 111v5M219.63 111v5M238.05 111v5M256.47 111v5M274.89 111v5M293.31 111v5M311.73 111v5M330.15 111v5M348.57 111v5M366.99 111v5M385.41 111v5M403.83 111v5M422.25 111v5M440.67 111v5M459.09 111v5M477.51 111v5M495.93 111v5M514.35 111v5M532.77 111v5M551.19 111v5M569.61 111v5M588.03 111v5M606.45 111v5M624.87 111v5M643.29 111v5M661.71 111v5M680.13 111v5M152 128.79h5M152 147.21h5M152 165.63h5M152 184.05h5M152 202.47h5M152 220.89h5M152 239.31h5M152 257.73h5M152 276.15h5M152 294.57h5M152 312.99h5M152 331.41h5M152 349.83h5M152 368.25h5M152 386.67h5M152 405.09h5M152 423.51h5" stroke="#dcdcdc" stroke-width=".6" fill="none"/><path d="M158.84 114v2M160.69 114v2M162.53 114v2M166.21 114v2M168.05 114v2M169.9 114v2M171.74 114v2M175.42 114v2M177.26 114v2M179.11 114v2M180.95 114v2M184.63 114v2M186.47 114v2M188.32 114v2M190.16 114v2M193.84 114v2M195.68 114v2M197.53 114v2M199.37 114v2M203.05 114v2M204.89 114v2M206.74 114v2M208.58 114v2M212.26 114v2M214.1 114v2M215.95 114v2M217.79 114v2M221.47 114v2M223.31 114v2M225.16 114v2M227 114v2M230.68 114v2M232.52 114v2M234.37 114v2M236.21 114v2M239.89 114v2M241.73 114v2M243.58 114v2M245.42 114v2M249.1 114v2M250.94 114v2M252.79 114v2M254.63 114v2M258.31 114v2M260.15 114v2M262 114v2M263.84 114v2M267.52 114v2M269.36 114v2M271.21 114v2M273.05 114v2M276.73 114v2M278.57 114v2M280.42 114v2M282.26 114v2M285.94 114v2M287.78 114v2M289.63 114v2M291.47 114v2M295.15 114v2M296.99 114v2M298.84 114v2M300.68 114v2M304.36 114v2M306.2 114v2M308.05 114v2M309.89 114v2M313.57 114v2M315.41 114v2M317.26 114v2M319.1 114v2M322.78 114v2M324.62 114v2M326.47 114v2M328.31 114v2M331.99 114v2M333.83 114v2M335.68 114v2M337.52 114v2M341.2 114v2M343.04 114v2M344.89 114v2M346.73 114v2M350.41 114v2M352.25 114v2M354.1 114v2M355.94 114v2M359.62 114v2M361.46 114v2M363.31 114v2M365.15 114v2M368.83 114v2M370.67 114v2M372.52 114v2M374.36 114v2M378.04 114v2M379.88 114v2M381.73 114v2M383.57 114v2M387.25 114v2M389.09 114v2M390.94 114v2M392.78 114v2M396.46 114v2M398.3 114v2M400.15 114v2M401.99 114v2M405.67 114v2M407.51 114v2M409.36 114v2M411.2 114v2M414.88 114v2M416.72 114v2M418.57 114v2M420.41 114v2M424.09 114v2M425.93 114v2M427.78 114v2M429.62 114v2M433.3 114v2M435.14 114v2M436.99 114v2M438.83 114v2M442.51 114v2M444.35 114v2M446.2 114v2M448.04 114v2M451.72 114v2M453.56 114v2M455.41 114v2M457.25 114v2M460.93 114v2M462.77 114v2M464.62 114v2M466.46 114v2M470.14 114v2M471.98 114v2M473.83 114v2M475.67 114v2M479.35 114v2M481.19 114v2M483.04 114v2M484.88 114v2M488.56 114v2M490.4 114v2M492.25 114v2M494.09 114v2M497.77 114v2M499.61 114v2M501.46 114v2M503.3 114v2M506.98 114v2M508.82 114v2M510.67 114v2M512.51 114v2M516.19 114v2M518.03 114v2M519.88 114v2M521.72 114v2M525.4 114v2M527.24 114v2M529.09 114v2M530.93 114v2M534.61 114v2M536.45 114v2M538.3 114v2M540.14 114v2M543.82 114v2M545.66 114v2M547.51 114v2M549.35 114v2M553.03 114v2M554.87 114v2M556.72 114v2M558.56 114v2M562.24 114v2M564.08 114v2M565.93 114v2M567.77 114v2M571.45 114v2M573.29 114v2M575.14 114v2M576.98 114v2M580.66 114v2M582.5 114v2M584.35 114v2M586.19 114v2M589.87 114v2M591.71 114v2M593.56 114v2M595.4 114v2M599.08 114v2M600.92 114v2M602.77 114v2M604.61 114v2M608.29 114v2M610.13 114v2M611.98 114v2M613.82 114v2M617.5 114v2M619.34 114v2M621.19 114v2M623.03 114v2M626.71 114v2M628.55 114v2M630.4 114v2M632.24 114v2M635.92 114v2M637.76 114v2M639.61 114v2M641.45 114v2M645.13 114v2M646.97 114v2M648.82 114v2M650.66 114v2M654.34 114v2M656.18 114v2M658.03 114v2M659.87 114v2M663.55 114v2M665.39 114v2M667.24 114v2M669.08 114v2M672.76 114v2M674.6 114v2M676.45 114v2M678.29 114v2M681.97 114v2M155 121.42h2M155 123.26h2M155 125.11h2M155 126.95h2M155 130.63h2M155 132.47h2M155 134.32h2M155 136.16h2M155 139.84h2M155 141.68h2M155 143.53h2M155 145.37h2M155 149.05h2M155 150.89h2M155 152.74h2M155 154.58h2M155 158.26h2M155 160.1h2M155 161.95h2M155 163.79h2M155 167.47h2M155 169.31h2M155 171.16h2M155 173h2M155 176.68h2M155 178.52h2M155 180.37h2M155 182.21h2M155 185.89h2M155 187.73h2M155 189.58h2M155 191.42h2M155 195.1h2M155 196.94h2M155 198.79h2M155 200.63h2M155 204.31h2M155 206.15h2M155 208h2M155 209.84h2M155 213.52h2M155 215.36h2M155 217.21h2M155 219.05h2M155 222.73h2M155 224.57h2M155 226.42h2M155 228.26h2M155 231.94h2M155 233.78h2M155 235.63h2M155 237.47h2M155 241.15h2M155 242.99h2M155 244.84h2M155 246.68h2M155 250.36h2M155 252.2h2M155 254.05h2M155 255.89h2M155 259.57h2M155 261.41h2M155 263.26h2M155 265.1h2M155 268.78h2M155 270.62h2M155 272.47h2M155 274.31h2M155 277.99h2M155 279.83h2M155 281.68h2M155 283.52h2M155 287.2h2M155 289.04h2M155 290.89h2M155 292.73h2M155 296.41h2M155 298.25h2M155 300.1h2M155 301.94h2M155 305.62h2M155 307.46h2M155 309.31h2M155 311.15h2M155 314.83h2M155 316.67h2M155 318.52h2M155 320.36h2M155 324.04h2M155 325.88h2M155 327.73h2M155 329.57h2M155 333.25h2M155 335.09h2M155 336.94h2M155 338.78h2M155 342.46h2M155 344.3h2M155 346.15h2M155 347.99h2M155 351.67h2M155 353.51h2M155 355.36h2M155 357.2h2M155 360.88h2M155 362.72h2M155 364.57h2M155 366.41h2M155 370.09h2M155 371.93h2M155 373.78h2M155 375.62h2M155 379.3h2M155 381.14h2M155 382.99h2M155 384.83h2M155 388.51h2M155 390.35h2M155 392.2h2M155 394.04h2M155 397.72h2M155 399.56h2M155 401.41h2M155 403.25h2M155 406.93h2M155 408.77h2M155 410.62h2M155 412.46h2M155 416.14h2M155 417.98h2M155 419.83h2M155 421.67h2M155 425.35h2M155 427.19h2M155 429.04h2M155 430.88h2M155 434.56h2" stroke="#e8e8e8" stroke-width=".5" fill="none"/></svg>
<div class="a" style="left:682.800px;top:116px;width:1.200px;height:320px;background:#cfcfcf"></div>
<div class="a" style="left:688px;top:106px;width:10px;height:329px;background:#eaeaea"></div>
<div class="a" style="left:688px;top:106px;width:10px;height:10.500px;background:#fff;border:1px solid #d4d4d4"></div>
<div class="a" style="left:688px;top:182px;width:10px;height:164px;background:#fff;border:1px solid #d4d4d4"></div>
<div class="a" style="left:688px;top:425px;width:10px;height:10px;background:#fff;border:1px solid #d4d4d4"></div>
<svg width="9" height="9" viewBox="0 0 9 9" style="left:688.500px;top:107px"><path d="M2.400 5.800l2.300-2.800l2.300 2.800z" fill="#555"/></svg>
<svg width="9" height="9" viewBox="0 0 9 9" style="left:688.500px;top:426px"><path d="M2.200 3l2.300 2.800l2.300-2.800z" fill="#555"/></svg>
<div class="a" style="left:147px;top:435.500px;width:541px;height:10px;background:#eaeaea;border-top:1px solid #dedede"></div>
<div class="a" style="left:147px;top:435.500px;width:10px;height:10px;background:#fff;border:1px solid #d4d4d4"></div>
<div class="a" style="left:294px;top:435.500px;width:256px;height:10px;background:#fff;border:1px solid #d4d4d4"></div>
<div class="a" style="left:679.500px;top:435.500px;width:9px;height:10px;background:#fff;border:1px solid #d4d4d4"></div>
<svg width="9" height="9" viewBox="0 0 9 9" style="left:147.500px;top:436.500px"><path d="M5.800 2.200l-2.800 2.300l2.800 2.300z" fill="#555"/></svg>
<svg width="9" height="9" viewBox="0 0 9 9" style="left:679.500px;top:436.500px"><path d="M3.200 2.200l2.800 2.300l-2.800 2.300z" fill="#555"/></svg>
<div class="a" style="left:147px;top:446px;width:551px;height:12px;background:#fff"></div>
<svg width="12" height="10" viewBox="0 0 12 10" style="left:148px;top:448px"><path d="M2 6.500l3.200-3.200l3.200 3.200" fill="none" stroke="#2b579a" stroke-width="1.300"/></svg>
<div class="a" style="left:160.800px;top:448.500px;width:1px;height:7px;background:#999"></div>
<div class="t" style="left:162.5px;top:450px;font-size:6.67px;color:#222;">Page-1</div>
<div class="dd" style="left:225px;top:452px;border-top-color:#666"></div>
<div class="a" style="left:232.500px;top:448.500px;width:1px;height:7px;background:#bbb"></div>
<svg width="10" height="10" viewBox="0 0 10 10" style="left:235.500px;top:447.500px"><path d="M1.500 5h7M5 1.500v7" stroke="#1a9a48" stroke-width="1.600"/></svg>
<div class="a" style="left:249.500px;top:448.500px;width:1px;height:7px;background:#ccc"></div>
<div class="t" style="left:257px;top:449px;font-size:6.98px;color:#2b579a;">Page-1</div>
<!-- FLOOR PLAN DRAWING -->
<svg width="525.300" height="319" viewBox="157.500 116.500 525.300 319" style="left:157.500px;top:116.500px;overflow:hidden" font-family="Liberation Sans, sans-serif">
<defs>
<pattern id="pLiving" width="2.400" height="8" patternUnits="userSpaceOnUse"><rect width="2.400" height="8" fill="#dbd7c7"/><rect width="1.200" height="8" fill="#d8d3c3"/></pattern>
<pattern id="pWash" width="30" height="30" patternUnits="userSpaceOnUse"><rect width="30" height="30" fill="#dceff6"/><circle cx="9.71" cy="4.53" r="1.29" fill="#cfe8f2"/><circle cx="24.64" cy="2.82" r="1.22" fill="#c9e4ef"/><circle cx="6.44" cy="2.58" r="1.08" fill="#d2e9f3"/><circle cx="2.72" cy="12.74" r="1.44" fill="#cfe8f2"/><circle cx="28.42" cy="18.92" r="1.22" fill="#cfe8f2"/><circle cx="-1.58" cy="18.92" r="1.22" fill="#cfe8f2"/><circle cx="17.31" cy="11.9" r="1.58" fill="#cfe8f2"/><circle cx="16.7" cy="4" r="1.08" fill="#c9e4ef"/><circle cx="3.53" cy="9.25" r="1.43" fill="#d2e9f3"/><circle cx="3.09" cy="17.14" r="0.87" fill="#cfe8f2"/><circle cx="16.43" cy="1.88" r="0.75" fill="#d2e9f3"/><circle cx="16.43" cy="31.88" r="0.75" fill="#d2e9f3"/><circle cx="14.89" cy="15.95" r="1.4" fill="#eaf6fb"/><circle cx="17.57" cy="13.6" r="0.97" fill="#d2e9f3"/><circle cx="20.97" cy="7.32" r="1.22" fill="#c9e4ef"/><circle cx="14.85" cy="10.3" r="1.1" fill="#c9e4ef"/><circle cx="29.41" cy="3.54" r="1.08" fill="#e7f5fa"/><circle cx="-0.59" cy="3.54" r="1.08" fill="#e7f5fa"/><circle cx="4.56" cy="14.67" r="0.74" fill="#cfe8f2"/><circle cx="22.94" cy="17.19" r="1.49" fill="#e7f5fa"/><circle cx="10.2" cy="10.51" r="1.15" fill="#eaf6fb"/><circle cx="2.06" cy="2.81" r="0.94" fill="#cfe8f2"/><circle cx="1.82" cy="21.04" r="1.28" fill="#eaf6fb"/><circle cx="31.82" cy="21.04" r="1.28" fill="#eaf6fb"/><circle cx="8.54" cy="11.57" r="1.3" fill="#cfe8f2"/><circle cx="28.22" cy="10.66" r="1.25" fill="#eaf6fb"/><circle cx="-1.78" cy="10.66" r="1.25" fill="#eaf6fb"/><circle cx="1.77" cy="23.05" r="0.82" fill="#d2e9f3"/><circle cx="31.77" cy="23.05" r="0.82" fill="#d2e9f3"/><circle cx="11.94" cy="27.5" r="1.15" fill="#d2e9f3"/><circle cx="13.48" cy="16.48" r="1.5" fill="#eaf6fb"/><circle cx="25.92" cy="8.35" r="1.07" fill="#e7f5fa"/><circle cx="20.48" cy="11.41" r="0.91" fill="#cfe8f2"/><circle cx="5.29" cy="6.96" r="0.91" fill="#eaf6fb"/><circle cx="24.93" cy="5.47" r="0.95" fill="#d2e9f3"/><circle cx="12.57" cy="11.08" r="1.21" fill="#d2e9f3"/><circle cx="20.71" cy="15.46" r="1.26" fill="#cfe8f2"/><circle cx="13.7" cy="26.13" r="1.56" fill="#c9e4ef"/><circle cx="11.77" cy="11.97" r="0.79" fill="#eaf6fb"/><circle cx="1.87" cy="2.02" r="0.89" fill="#d2e9f3"/><circle cx="31.87" cy="2.02" r="0.89" fill="#d2e9f3"/></pattern>
</defs>
<rect x="196" y="148" width="87" height="155" fill="#f5f4f0"/>
<rect x="282" y="148" width="198" height="155" fill="url(#pLiving)"/>
<rect x="478" y="262" width="76" height="41" fill="url(#pLiving)"/>
<rect x="480" y="148" width="143" height="115" fill="#f5f4f0"/>
<rect x="553" y="263" width="70" height="40" fill="#8fd3e5"/>
<rect x="250" y="303" width="85" height="109" fill="url(#pWash)"/>
<rect x="335" y="303" width="154" height="109" fill="#f5f4f0"/>
<rect x="489" y="303" width="134" height="109" fill="#f5f4f0"/>
<path d="M194.2 146.3h431.8v4.4h-431.8zM194.2 146.3h4.3v158.9h-4.3zM621.7 146.3h4.3v268.3h-4.3zM194.2 300.8h145.8v4.4h-145.8zM365 300.9h130.5v4.4h-130.5zM519.3 300.9h106.7v4.4h-106.7zM280.5 146.3h4.1v158.9h-4.1zM478 146.3h4v118.7h-4zM478 261h148v4.1h-148zM551.2 264h3.9v41h-3.9zM247.5 303h4.3v111.6h-4.3zM333 303h4.4v111.6h-4.4zM487 303h4.3v111.6h-4.3zM247.5 410h378.5v4.6h-378.5z" fill="#000"/>
<rect x="408" y="146.3" width="53.5" height="4" fill="#fad6dc" stroke="#ee9eb0" stroke-width=".5"/>
<rect x="408" y="146.3" width="3" height="4" fill="#fff4f6" stroke="#f0a2b4" stroke-width=".4"/><rect x="458.5" y="146.3" width="3" height="4" fill="#fff4f6" stroke="#f0a2b4" stroke-width=".4"/>
<rect x="456.2" y="147.65" width="1.300" height="1.300" fill="#222"/>
<rect x="502" y="146.3" width="99" height="4" fill="#fad6dc" stroke="#ee9eb0" stroke-width=".5"/>
<rect x="502" y="146.3" width="3" height="4" fill="#fff4f6" stroke="#f0a2b4" stroke-width=".4"/><rect x="598" y="146.3" width="3" height="4" fill="#fff4f6" stroke="#f0a2b4" stroke-width=".4"/>
<rect x="595.7" y="147.65" width="1.300" height="1.300" fill="#222"/>
<rect x="280.8" y="170" width="3.5" height="94" fill="#fad6dc" stroke="#ee9eb0" stroke-width=".5"/>
<rect x="280.8" y="170" width="3.5" height="3" fill="#fff4f6" stroke="#f0a2b4" stroke-width=".4"/><rect x="280.8" y="261" width="3.5" height="3" fill="#fff4f6" stroke="#f0a2b4" stroke-width=".4"/>
<rect x="621.9" y="270.4" width="3.9" height="25" fill="#fad6dc" stroke="#ee9eb0" stroke-width=".5"/>
<rect x="621.9" y="270.4" width="3.9" height="3" fill="#fff4f6" stroke="#f0a2b4" stroke-width=".4"/><rect x="621.9" y="292.4" width="3.9" height="3" fill="#fff4f6" stroke="#f0a2b4" stroke-width=".4"/>
<rect x="267" y="410.3" width="53" height="4" fill="#fad6dc" stroke="#ee9eb0" stroke-width=".5"/>
<rect x="267" y="410.3" width="3" height="4" fill="#fff4f6" stroke="#f0a2b4" stroke-width=".4"/><rect x="317" y="410.3" width="3" height="4" fill="#fff4f6" stroke="#f0a2b4" stroke-width=".4"/>
<rect x="314.7" y="411.65" width="1.300" height="1.300" fill="#222"/>
<rect x="343.4" y="410.3" width="135.6" height="4" fill="#fad6dc" stroke="#ee9eb0" stroke-width=".5"/>
<rect x="343.4" y="410.3" width="3" height="4" fill="#fff4f6" stroke="#f0a2b4" stroke-width=".4"/><rect x="476" y="410.3" width="3" height="4" fill="#fff4f6" stroke="#f0a2b4" stroke-width=".4"/>
<rect x="473.7" y="411.65" width="1.300" height="1.300" fill="#222"/>
<rect x="531" y="410.3" width="52.5" height="4" fill="#fad6dc" stroke="#ee9eb0" stroke-width=".5"/>
<rect x="531" y="410.3" width="3" height="4" fill="#fff4f6" stroke="#f0a2b4" stroke-width=".4"/><rect x="580.5" y="410.3" width="3" height="4" fill="#fff4f6" stroke="#f0a2b4" stroke-width=".4"/>
<rect x="578.2" y="411.65" width="1.300" height="1.300" fill="#222"/>
<rect x="333.3" y="360" width="3.9" height="44.3" fill="#fad6dc" stroke="#ee9eb0" stroke-width=".5"/>
<rect x="333.3" y="360" width="3.9" height="3" fill="#fff4f6" stroke="#f0a2b4" stroke-width=".4"/><rect x="333.3" y="401.3" width="3.9" height="3" fill="#fff4f6" stroke="#f0a2b4" stroke-width=".4"/>
<rect x="551.3" y="278.4" width="3.5" height="22" fill="#fad6dc" stroke="#ee9eb0" stroke-width=".5"/>
<rect x="551.3" y="278.4" width="3.5" height="3" fill="#fff4f6" stroke="#f0a2b4" stroke-width=".4"/><rect x="551.3" y="297.4" width="3.5" height="3" fill="#fff4f6" stroke="#f0a2b4" stroke-width=".4"/>
<rect x="350" y="145.500" width="25.500" height="5.500" fill="#fbe3e7"/>
<path d="M350.300 146.600h25v3.800h-25z" fill="#fde9ed" stroke="#f0a2b4" stroke-width=".5"/>
<path d="M351.500 150.700h3.600v20.400h-3.600z" fill="#fdf0f2" stroke="#ee9eb0" stroke-width=".5"/><path d="M355.100 171.100c11-1 18.500-9 19.500-20.400" fill="none" stroke="#ee9eb0" stroke-width=".5"/>
<rect x="485.400" y="260.500" width="24.600" height="5" fill="#f5f4f0"/>
<path d="M485.700 261.300h24v3.600h-24z" fill="#fde9ed" stroke="#f0a2b4" stroke-width=".5"/>
<path d="M486.500 240h2.800v21h-2.800z" fill="#fdf0f2" stroke="#ee93a6" stroke-width=".6"/><path d="M489.300 240c11 1 19 9 20.200 21" fill="none" stroke="#ee93a6" stroke-width=".6"/>
<rect x="340" y="300" width="25" height="5.500" fill="#f5f4f0"/>
<path d="M340.700 301.200h24v3.800h-24z" fill="#fde9ed" stroke="#f0a2b4" stroke-width=".5"/>
<path d="M342.100 305.200h3.300v20.500h-3.300z" fill="#fdf0f2" stroke="#ee9eb0" stroke-width=".5"/><path d="M345.400 325.700c10.500-1 17.800-9 18.800-20.500" fill="none" stroke="#ee9eb0" stroke-width=".5"/>
<rect x="494.500" y="300" width="25" height="5.500" fill="#f5f4f0"/>
<path d="M495.200 301.200h24.200v3.800h-24.200z" fill="#fde9ed" stroke="#f0a2b4" stroke-width=".5"/>
<path d="M496.100 305.200h3.300v20.200h-3.300z" fill="#fdf0f2" stroke="#ee9eb0" stroke-width=".5"/><path d="M499.400 325.400c10.500-1 17.700-9 18.700-20.200" fill="none" stroke="#ee9eb0" stroke-width=".5"/>
<path d="M555 298.500h18M555 297h1.500" fill="none" stroke="#ee93a6" stroke-width=".7"/><path d="M555.500 280c9 1.500 15.500 8 17.500 18.500" fill="none" stroke="#ee93a6" stroke-width=".6"/>
<g id="furniture">
<!-- kitchen cabinets -->
<g fill="#f19c2e" stroke="#dc8a2a" stroke-width=".5">
<rect x="199" y="151" width="16.500" height="45.500"/><path d="M199 173.500h16.500" fill="none"/>
<rect x="235" y="151" width="37" height="12"/><path d="M253.500 151v12" fill="none"/>
<rect x="261" y="270" width="19.500" height="30"/>
</g>
<!-- sink -->
<g fill="#f1f1ef" stroke="#c4c4c4" stroke-width=".5">
<rect x="200" y="205" width="14" height="31.500"/>
<rect x="202" y="207" width="10.500" height="12" fill="#f8f8f8"/><rect x="202" y="222" width="10.500" height="12" fill="#f8f8f8"/>
<path d="M203 213h4M203 228h4" fill="none" stroke="#999"/>
</g>
<!-- stove -->
<g fill="#cdd7e1" stroke="#9fb0c2" stroke-width=".5">
<rect x="198.700" y="251" width="21.700" height="23.600"/><rect x="198.700" y="274.600" width="21.700" height="23.700"/>
<g fill="#d9e2ea"><circle cx="206" cy="256.4" r="3.200"/><circle cx="206" cy="256.4" r="1.700" fill="#cdd7e1"/><circle cx="214.1" cy="256.4" r="3.200"/><circle cx="214.1" cy="256.4" r="1.700" fill="#cdd7e1"/><circle cx="206" cy="268.2" r="3.200"/><circle cx="206" cy="268.2" r="1.700" fill="#cdd7e1"/><circle cx="214.1" cy="268.2" r="3.200"/><circle cx="214.1" cy="268.2" r="1.700" fill="#cdd7e1"/><circle cx="206" cy="280" r="3.200"/><circle cx="206" cy="280" r="1.700" fill="#cdd7e1"/><circle cx="214.1" cy="280" r="3.200"/><circle cx="214.1" cy="280" r="1.700" fill="#cdd7e1"/><circle cx="206" cy="291.6" r="3.200"/><circle cx="206" cy="291.6" r="1.700" fill="#cdd7e1"/><circle cx="214.1" cy="291.6" r="3.200"/><circle cx="214.1" cy="291.6" r="1.700" fill="#cdd7e1"/></g>
</g>
<!-- lamps -->
<g fill="#f8dc9a" stroke="#e2bc68" stroke-width=".4">
<ellipse cx="293.800" cy="156" rx="2" ry="2.700"/><ellipse cx="301.400" cy="156" rx="2" ry="2.700"/><ellipse cx="308.600" cy="156" rx="2" ry="2.700"/><ellipse cx="316.300" cy="156" rx="2" ry="2.700"/>
<rect x="292.800" y="151.800" width="2" height="1.800" rx=".6"/><rect x="300.400" y="151.800" width="2" height="1.800" rx=".6"/><rect x="307.600" y="151.800" width="2" height="1.800" rx=".6"/><rect x="315.300" y="151.800" width="2" height="1.800" rx=".6"/>
</g>
<!-- dining table -->
<g fill="#e1672a" stroke="#cf5a22" stroke-width=".3">
<rect x="308" y="237.400" width="13.600" height="9" rx="1.200"/><rect x="308" y="285" width="13.600" height="9" rx="1.200"/>
<rect x="295.200" y="252.200" width="9" height="12.300" rx="1.200"/><rect x="295.200" y="267.500" width="9" height="12.700" rx="1.200"/>
<rect x="325.400" y="252.200" width="9" height="12.300" rx="1.200"/><rect x="325.400" y="267.500" width="9" height="12.700" rx="1.200"/>
<path d="M308.500 242.300h12.600l7.100 9.100v30.400l-7.100 6.600h-12.600l-6.200-6.600v-30.400z"/>
</g>
<!-- sofa -->
<g fill="#c48d6d" stroke="#a8704f" stroke-width=".4">
<path d="M389 165.300h39.700v19.200h-19.300v55.500h-20.400z" fill="#b98060"/>
<rect x="391.500" y="166.300" width="36.700" height="17.700" rx=".8"/>
<rect x="391.500" y="185" width="17.400" height="17.500" rx=".8"/><rect x="391.500" y="203.300" width="17.400" height="17.500" rx=".8"/><rect x="391.500" y="221.600" width="17.400" height="17.800" rx=".8"/>
<rect x="391.800" y="244.400" width="12.700" height="12" fill="#c08868"/><circle cx="398.200" cy="250.400" r="2.400" fill="none"/><path d="M398.200 247v6.800M394.800 250.400h6.800" fill="none"/>
<rect x="410.600" y="240.600" width="18.100" height="17.400" rx="1.500" fill="#b98060"/><rect x="411.800" y="242.300" width="16" height="14.800" rx="1"/>
</g>
<!-- TV cabinet -->
<rect x="466.700" y="169.200" width="11.300" height="83.500" fill="#bd8666" stroke="#a8704f" stroke-width=".4"/>
<path d="M469.300 193.500v35l2.600-.8c2.800-8.500 2.800-25 0-33.400z" fill="#6e6e72" stroke="#4a4a4e" stroke-width=".4"/>
<!-- plants -->
<path d="M466.34 149.85L467.17 154.52L470.56 152.03L469.27 156.04L473.97 155.34L470.33 158.39L474 160.06L470.08 160.97L472.8 164.52L468.56 163.07L468.88 166.91L466.21 164.13L464.46 168.55L463.63 163.88L460.24 166.37L461.53 162.36L456.83 163.06L460.47 160.01L456.8 158.34L460.72 157.43L458 153.88L462.24 155.33L461.92 151.49L464.59 154.27z" fill="#1a9a50" stroke="#12824a" stroke-width=".3"/>
<path d="M466.88 154.42L466.93 157.35L469.82 156.87L467.79 158.98L470.18 160.68L467.25 160.73L467.73 163.62L465.62 161.59L463.92 163.98L463.87 161.05L460.98 161.53L463.01 159.42L460.62 157.72L463.55 157.67L463.07 154.78L465.18 156.81z" fill="#138a46"/>
<path d="M613.18 305.77L613.3 310.2L616.66 308.51L615.04 311.9L619.47 311.92L615.7 314.24L619.01 316.35L615.1 316.6L617.04 320.2L613.4 318.34L613.14 321.93L611.06 319L608.82 322.83L608.7 318.4L605.34 320.09L606.96 316.7L602.53 316.68L606.3 314.36L602.99 312.25L606.9 312L604.96 308.4L608.6 310.26L608.86 306.67L610.94 309.6z" fill="#1a9a50" stroke="#12824a" stroke-width=".3"/>
<path d="M611.46 309.72L612.04 312.36L614.56 311.39L613.11 313.67L615.58 314.76L612.94 315.34L613.91 317.86L611.63 316.41L610.54 318.88L609.96 316.24L607.44 317.21L608.89 314.93L606.42 313.84L609.06 313.26L608.09 310.74L610.37 312.19z" fill="#138a46"/>
<path d="M261.92 306.81L262.34 310.88L263.85 308.46L263.53 311.29L266.14 308.71L264.54 312.02L266.79 311.06L265.32 313.01L269.31 312.1L265.78 314.17L269.03 314.5L265.89 315.42L268.34 316.54L265.65 316.65L268.96 319.07L265.08 317.76L266.66 320.14L264.21 318.67L265.47 322.12L263.13 319.29L263.07 321.73L261.91 319.58L261.08 323.59L260.66 319.52L259.01 322.34L259.47 319.11L257.44 320.87L258.46 318.38L254.88 320.38L257.68 317.39L254.87 317.84L257.22 316.23L253.55 315.94L257.11 314.98L254.9 313.91L257.35 313.75L254.04 311.33L257.92 312.64L256.04 309.97L258.79 311.73L258.03 309.15L259.87 311.11L259.54 307.03L261.09 310.82z" fill="#0f7a3a" stroke="#0a6430" stroke-width=".2"/>
<circle cx="261.500" cy="315.200" r="4.800" fill="#0f7a3a"/><circle cx="261.500" cy="315.200" r="2.400" fill="#22a254"/>
<path d="M519.500 400l-3-5.300l3.800 3l1.200-3.400l1.600 3.800l3.400-1.600l-2 3.200l2.200 2l-3 .6l1.200 2.700l-4.200-1.400l-1.800 1.600l-1.400-1.800l-5.500.8l3.800-2.700l-3-1.500z" fill="#1a8a48" stroke="#12703a" stroke-width=".3"/>
<!-- bedroom1 -->
<rect x="483.500" y="152.200" width="20" height="15" rx="2.500" fill="#f19c2e" stroke="#dc8a2a" stroke-width=".5"/>
<rect x="608" y="179" width="13" height="81.500" fill="#f19c2e" stroke="#dc8a2a" stroke-width=".5"/>
<g fill="#fde9cf" stroke="#dcc09a" stroke-width=".5">
<rect x="526.200" y="152" width="48" height="56.500"/>
<rect x="531.500" y="154" width="16" height="9.500" rx=".8" stroke="#cdb08a" stroke-width=".7"/><rect x="553" y="154" width="16" height="9.500" rx=".8" stroke="#cdb08a" stroke-width=".7"/>
<path d="M574.200 167.400h-28.700l-19 7.100l11.500 4.500l7.500-8.900h28.700M546 173.200h28.200" fill="none"/>
</g>
<!-- small bath fixtures -->
<g fill="#fbe3c0" stroke="#d8b88a" stroke-width=".5">
<rect x="558.500" y="266" width="12" height="11.500" rx="1"/>
<ellipse cx="584" cy="275.800" rx="4.300" ry="5.300"/><rect x="579" y="265.800" width="10" height="4.300" rx="1"/>
</g>
<rect x="604.200" y="266" width="14.600" height="29.500" rx="1" fill="#a4aab2" stroke="#7a828c" stroke-width=".5"/><rect x="605.600" y="267.500" width="11.800" height="26.500" rx="1.200" fill="#d8dade" stroke="#8a9098" stroke-width=".4"/><circle cx="611.500" cy="270.500" r="1.100" fill="none" stroke="#8a9098" stroke-width=".4"/>
<!-- washroom fixtures -->
<g fill="#fbe3c0" stroke="#e0c090" stroke-width=".5">
<circle cx="259" cy="342.500" r="8.500"/>
<path d="M251.800 373.500h16.200l16.400 16.500v17.200h-32.600z"/>
</g>
<path d="M251.800 368.900h50.200" stroke="#5c7484" stroke-width="1.200"/>
<!-- bedroom2 -->
<g fill="#f19c2e" stroke="#dc8a2a" stroke-width=".5">
<rect x="378" y="305.500" width="38" height="13"/><path d="M397 305.500v13" fill="none"/>
<rect x="377.500" y="391" width="38.500" height="17"/>
</g>
<g fill="#cde5f9" stroke="#8dbfe8" stroke-width=".6">
<path d="M464.86 328.12L478.31 335.89L486.08 349.34L486.08 364.86L478.31 378.31L464.86 386.08L449.34 386.08L435.89 378.31L428.12 364.86L428.12 349.34L435.89 335.89L449.34 328.12z"/>
<path d="M464.35 330.05L476.9 337.3L484.15 349.85L484.15 364.35L476.9 376.9L464.35 384.15L449.85 384.15L437.3 376.9L430.05 364.35L430.05 349.85L437.3 337.3L449.85 330.05z" fill="none" stroke-width=".4"/>
<path d="M442.500 341.500a22 22 0 0 0 0 31" fill="none" stroke-width=".5"/>
<path d="M472 334l-14 17l11.500 26M474.500 339.500l-13.500 12l11 21.500" fill="none" stroke-width=".5"/>
<path d="M470 343l6 1.200l-1.200 6l-6-1.200zM471 351.200l6 .8l-.8 6l-6-.8zM471.200 359.500l6 .300l-.3 6l-6-.3zM470.300 367.500l6 -.200l.2 5.800l-6 .2z" fill="#d9ebfa" stroke-width=".5"/>
</g>
<!-- study -->
<g fill="#f19c2e" stroke="#dc8a2a" stroke-width=".5">
<rect x="492" y="343" width="10.500" height="65.500"/><rect x="493.500" y="344.500" width="7.500" height="62.500" fill="none"/>
<rect x="531" y="385.900" width="52.600" height="22.600"/>
<path d="M550.200 365h14c.7 0 1.200.5 1.200 1.200v11.600c0 2.200-1.500 3.700-3.700 3.700h-9c-2.200 0-3.700-1.500-3.700-3.700v-11.600c0-.7.500-1.200 1.200-1.200z"/><path d="M549 367.800h16.400" fill="none"/>
</g>
</g>

<path d="M196.75 132.5H281.75M196.75 128.5v11.500M281.75 128.5v11.500M281.75 132.5H480M281.75 128.5v11.500M480 128.5v11.500M480 132.5H627.5M480 128.5v11.500M627.5 128.5v11.500M246.5 430.4H336.4M246.5 426.4v11.500M336.4 426.4v11.500M336.4 430.4H492.4M336.4 426.4v11.500M492.4 426.4v11.500M492.4 430.4H627.3M492.4 426.4v11.500M627.3 426.4v11.500M179.6 150.4V304.7M174.1 150.4h12M174.1 304.7h12M179.6 304.7V416M174.1 304.7h12M174.1 416h12M637.8 145.2V303.8M632.3 145.2h12M632.3 303.8h12M637.8 303.8V414.3M632.3 303.8h12M632.3 414.3h12" fill="none" stroke="#1a1a1a" stroke-width=".85"/>
<path d="M196.75 132.5l4 -1.200v2.400zM281.75 132.5l-4 -1.200v2.400zM281.75 132.5l4 -1.200v2.400zM480 132.5l-4 -1.200v2.400zM480 132.5l4 -1.200v2.400zM627.5 132.5l-4 -1.200v2.400zM246.5 430.4l4 -1.200v2.400zM336.4 430.4l-4 -1.200v2.400zM336.4 430.4l4 -1.200v2.400zM492.4 430.4l-4 -1.200v2.400zM492.4 430.4l4 -1.200v2.400zM627.3 430.4l-4 -1.200v2.400zM179.6 150.4l-1.200 4h2.400zM179.6 304.7l-1.200 -4h2.400zM179.6 304.7l-1.200 4h2.400zM179.6 416l-1.200 -4h2.400zM637.8 145.2l-1.200 4h2.400zM637.8 303.8l-1.200 -4h2.400zM637.8 303.8l-1.200 4h2.400zM637.8 414.3l-1.200 -4h2.400z" fill="#222"/>
<text x="224.5" y="127.67" font-size="6.03" fill="#3c3c3c">2312.2mm</text>
<text x="366" y="127.67" font-size="6.03" fill="#3c3c3c">5361.4mm</text>
<text x="538" y="127.71" font-size="6.14" fill="#3c3c3c">3997.9mm</text>
<text x="278.7" y="425.16" font-size="5.99" fill="#3c3c3c">2438mm</text>
<text x="400" y="425.15" font-size="5.97" fill="#3c3c3c">4252.1mm</text>
<text x="544.6" y="425.2" font-size="6.12" fill="#3c3c3c">3628.2mm</text>
<text transform="translate(174.72 242) rotate(-90)" font-size="6.46" fill="#3c3c3c">4207.9mm</text>
<text transform="translate(174.49 375.7) rotate(-90)" font-size="6.07" fill="#3c3c3c">3024.3mm</text>
<text transform="translate(632.55 238.5) rotate(-90)" font-size="6.24" fill="#3c3c3c">4320.9mm</text>
<text transform="translate(632.53 373) rotate(-90)" font-size="6.2" fill="#3c3c3c">2978.4mm</text>
<text x="243.7" y="227.66" font-size="6" fill="#4a5268">Kitchen</text>
<text x="344.5" y="218.27" font-size="6.3" fill="#4a5268">Living Room</text>
<text x="538" y="243.98" font-size="6.33" fill="#4a5268">Bedroom</text>
<text x="284.5" y="340.33" font-size="6.46" fill="#4a5268">Washroom</text>
<text x="364.5" y="375.31" font-size="6.41" fill="#4a5268">Bedroom</text>
<text x="538.7" y="343.22" font-size="6.18" fill="#4a5268">Study</text>
</svg>
<!-- COLOUR BAR -->
<div class="t" style="left:149.5px;top:458px;font-size:7.05px;color:#222;">Fill</div>
<div class="a" style="left:163px;top:458.400px;width:509.08px;height:7px;display:flex"><span style="flex:1;background:#b3000c;border-right:.5px solid #fff"></span><span style="flex:1;background:#e0101b;border-right:.5px solid #fff"></span><span style="flex:1;background:#d8406a;border-right:.5px solid #fff"></span><span style="flex:1;background:#e85878;border-right:.5px solid #fff"></span><span style="flex:1;background:#e86070;border-right:.5px solid #fff"></span><span style="flex:1;background:#e850a0;border-right:.5px solid #fff"></span><span style="flex:1;background:#f0a0c8;border-right:.5px solid #fff"></span><span style="flex:1;background:#f08090;border-right:.5px solid #fff"></span><span style="flex:1;background:#f090b0;border-right:.5px solid #fff"></span><span style="flex:1;background:#f8a070;border-right:.5px solid #fff"></span><span style="flex:1;background:#f8b090;border-right:.5px solid #fff"></span><span style="flex:1;background:#f8c8c0;border-right:.5px solid #fff"></span><span style="flex:1;background:#f0d8e8;border-right:.5px solid #fff"></span><span style="flex:1;background:#fcd0d8;border-right:.5px solid #fff"></span><span style="flex:1;background:#fce8ec;border-right:.5px solid #fff"></span><span style="flex:1;background:#1a2c5b;border-right:.5px solid #fff"></span><span style="flex:1;background:#203a7a;border-right:.5px solid #fff"></span><span style="flex:1;background:#3c3c8c;border-right:.5px solid #fff"></span><span style="flex:1;background:#2c4c9c;border-right:.5px solid #fff"></span><span style="flex:1;background:#2060a8;border-right:.5px solid #fff"></span><span style="flex:1;background:#3070b8;border-right:.5px solid #fff"></span><span style="flex:1;background:#4888c8;border-right:.5px solid #fff"></span><span style="flex:1;background:#3090d0;border-right:.5px solid #fff"></span><span style="flex:1;background:#20a0e0;border-right:.5px solid #fff"></span><span style="flex:1;background:#30b0e8;border-right:.5px solid #fff"></span><span style="flex:1;background:#50b8e8;border-right:.5px solid #fff"></span><span style="flex:1;background:#70c0e8;border-right:.5px solid #fff"></span><span style="flex:1;background:#90c8e8;border-right:.5px solid #fff"></span><span style="flex:1;background:#b0d8f0;border-right:.5px solid #fff"></span><span style="flex:1;background:#d4eaf8;border-right:.5px solid #fff"></span><span style="flex:1;background:#0a4a2a;border-right:.5px solid #fff"></span><span style="flex:1;background:#106040;border-right:.5px solid #fff"></span><span style="flex:1;background:#087050;border-right:.5px solid #fff"></span><span style="flex:1;background:#507030;border-right:.5px solid #fff"></span><span style="flex:1;background:#208040;border-right:.5px solid #fff"></span><span style="flex:1;background:#109050;border-right:.5px solid #fff"></span><span style="flex:1;background:#10a070;border-right:.5px solid #fff"></span><span style="flex:1;background:#30b090;border-right:.5px solid #fff"></span><span style="flex:1;background:#40c0a0;border-right:.5px solid #fff"></span><span style="flex:1;background:#20b080;border-right:.5px solid #fff"></span><span style="flex:1;background:#40b060;border-right:.5px solid #fff"></span><span style="flex:1;background:#70b820;border-right:.5px solid #fff"></span><span style="flex:1;background:#90c840;border-right:.5px solid #fff"></span><span style="flex:1;background:#b0d860;border-right:.5px solid #fff"></span><span style="flex:1;background:#d4ead4;border-right:.5px solid #fff"></span><span style="flex:1;background:#e05010;border-right:.5px solid #fff"></span><span style="flex:1;background:#f07020;border-right:.5px solid #fff"></span><span style="flex:1;background:#f08030;border-right:.5px solid #fff"></span><span style="flex:1;background:#f09040;border-right:.5px solid #fff"></span><span style="flex:1;background:#f8a020;border-right:.5px solid #fff"></span><span style="flex:1;background:#f8b020;border-right:.5px solid #fff"></span><span style="flex:1;background:#f8b830;border-right:.5px solid #fff"></span><span style="flex:1;background:#f8c020;border-right:.5px solid #fff"></span><span style="flex:1;background:#f8d020;border-right:.5px solid #fff"></span><span style="flex:1;background:#f8e020;border-right:.5px solid #fff"></span><span style="flex:1;background:#f8e060;border-right:.5px solid #fff"></span><span style="flex:1;background:#f8e090;border-right:.5px solid #fff"></span><span style="flex:1;background:#f0d090;border-right:.5px solid #fff"></span><span style="flex:1;background:#f8e0b0;border-right:.5px solid #fff"></span><span style="flex:1;background:#fce8d0;border-right:.5px solid #fff"></span><span style="flex:1;background:#703080;border-right:.5px solid #fff"></span><span style="flex:1;background:#803890;border-right:.5px solid #fff"></span><span style="flex:1;background:#7040a0;border-right:.5px solid #fff"></span><span style="flex:1;background:#8050a8;border-right:.5px solid #fff"></span><span style="flex:1;background:#a060b0;border-right:.5px solid #fff"></span><span style="flex:1;background:#b070b8;border-right:.5px solid #fff"></span><span style="flex:1;background:#d080c0;border-right:.5px solid #fff"></span><span style="flex:1;background:#b090d0;border-right:.5px solid #fff"></span><span style="flex:1;background:#c0a0c8;border-right:.5px solid #fff"></span><span style="flex:1;background:#f0c0e0;border-right:.5px solid #fff"></span><span style="flex:1;background:#702010;border-right:.5px solid #fff"></span><span style="flex:1;background:#903818;border-right:.5px solid #fff"></span><span style="flex:1;background:#a04820;border-right:.5px solid #fff"></span><span style="flex:1;background:#c05818;border-right:.5px solid #fff"></span><span style="flex:1;background:#d07828;border-right:.5px solid #fff"></span><span style="flex:1;background:#c08858;border-right:.5px solid #fff"></span><span style="flex:1;background:#e8c490;border-right:.5px solid #fff"></span><span style="flex:1;background:#e4dccc;border-right:.5px solid #fff"></span><span style="flex:1;background:#dcdcdc;border-right:.5px solid #fff"></span><span style="flex:1;background:#000000;border-right:.5px solid #fff"></span><span style="flex:1;background:#303030;border-right:.5px solid #fff"></span><span style="flex:1;background:#505050;border-right:.5px solid #fff"></span><span style="flex:1;background:#707070;border-right:.5px solid #fff"></span><span style="flex:1;background:#8c8c8c;border-right:.5px solid #fff"></span><span style="flex:1;background:#a4a4a4;border-right:.5px solid #fff"></span><span style="flex:1;background:#b8b8b8;border-right:.5px solid #fff"></span><span style="flex:1;background:#cccccc;border-right:.5px solid #fff"></span><span style="flex:1;background:#dedede;border-right:.5px solid #fff"></span><span style="flex:1;background:#eeeeee;border-right:.5px solid #fff"></span></div>
<!-- STATUS BAR -->
<div id="status" class="a"></div>
<div class="t" style="left:7.7px;top:472px;font-size:7.21px;color:#fff;">https://www.edrawsoft.com</div>
<div class="t" style="left:100.3px;top:473px;font-size:6.49px;color:#fff;">Page 1/1</div>
<svg width="200" height="17" viewBox="500 466 200 17" style="left:500px;top:466px">
<rect x="508" y="470.500" width="10.500" height="8.500" fill="#c3d3ec" stroke="#e8eef8" stroke-width=".6"/><rect x="510" y="472.300" width="6.500" height="5" fill="#dfe8f6" stroke="#8aa4d0" stroke-width=".5"/>
<rect x="520.500" y="471.300" width="7" height="7" fill="none" stroke="#fff" stroke-width=".9"/><path d="M523 471.300v7M523 474h4.500M523 476.300h4.500" stroke="#fff" stroke-width=".7"/>
<path d="M531 471.500h7v4.500h-7zM534.500 476v2.300M532.500 478.500h4" fill="none" stroke="#fff" stroke-width=".9"/>
<path d="M543.500 474.800h3.500" stroke="#fff" stroke-width=".9"/>
<path d="M552 474.800h52" stroke="#dfe6f3" stroke-width=".8"/>
<rect x="562" y="470.300" width="3" height="9" fill="#fff"/>
<path d="M607 474.800h4.400M609.200 472.600v4.400" stroke="#fff" stroke-width=".9"/>
<path d="M638.800 474h2.400l-1.200 1.500z" fill="#8aa4d0"/>
<rect x="646.500" y="471.500" width="6" height="6" fill="none" stroke="#fff" stroke-width="1"/><rect x="648.300" y="473.300" width="2.400" height="2.400" fill="#9fb6dc"/>
<g fill="none" stroke="#fff" stroke-width=".8"><rect x="656.500" y="471.300" width="3" height="2.800"/><rect x="660.800" y="471.300" width="3" height="2.800"/><rect x="656.500" y="475.400" width="3" height="2.800"/><rect x="660.800" y="475.400" width="3" height="2.800"/></g>
<circle cx="670" cy="474" r="2.300" fill="#dfe8f6" stroke="#fff" stroke-width=".9"/><path d="M671.800 475.800l2.600 2.600" stroke="#fff" stroke-width="1.300"/>
<path d="M678.500 471.500h7v6.500h-7zM678.500 473.700h7M678.500 475.900h7M680.800 471.500v6.500M683.100 471.500v6.500" fill="none" stroke="#fff" stroke-width=".7"/>
<g fill="#c3d3ec"><rect x="695" y="477" width="1.300" height="1.300"/><rect x="695" y="479.500" width="1.300" height="1.300"/><rect x="692.500" y="479.500" width="1.300" height="1.300"/><rect x="690" y="479.500" width="1.300" height="1.300" opacity="0"/></g>
</svg>
<div class="t" style="left:619px;top:472px;font-size:7.49px;color:#fff;">85%</div></div>
</body>
</html>
